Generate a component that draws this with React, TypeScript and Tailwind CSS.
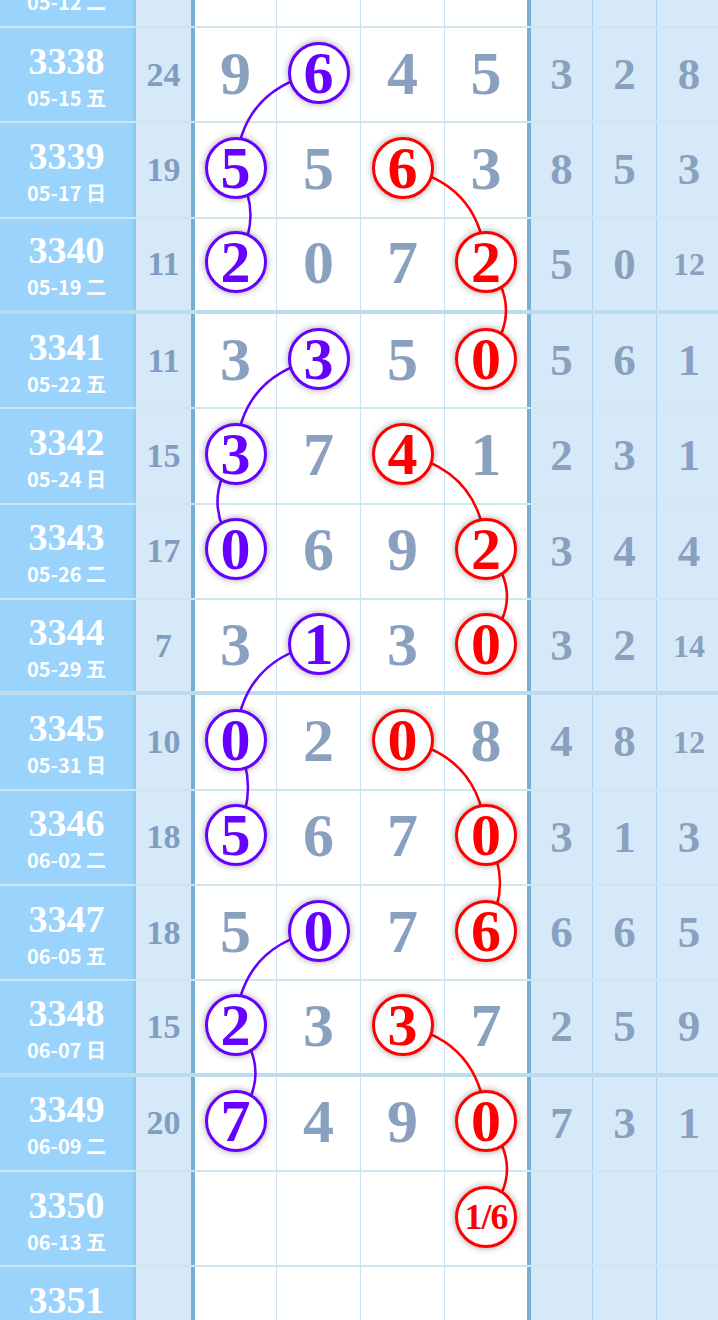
import React from "react";

interface Cell {
  v: string;
  m?: "p" | "r";
}

interface Row {
  no: number;
  date: string;
  sum: string;
  nums: Cell[];
  right: string[];
}

const H = 95.33;
const FIRST_LINE = 28;
const COL_X = [235.5, 319, 402.5, 486];

const n = (v: string, m?: "p" | "r"): Cell => ({ v, m });

const rows: Row[] = [
  { no: 3337, date: "05-12 二", sum: "23", nums: [n("7"), n("3"), n("9"), n("4")], right: ["1", "4", "6"] },
  { no: 3338, date: "05-15 五", sum: "24", nums: [n("9"), n("6", "p"), n("4"), n("5")], right: ["3", "2", "8"] },
  { no: 3339, date: "05-17 日", sum: "19", nums: [n("5", "p"), n("5"), n("6", "r"), n("3")], right: ["8", "5", "3"] },
  { no: 3340, date: "05-19 二", sum: "11", nums: [n("2", "p"), n("0"), n("7"), n("2", "r")], right: ["5", "0", "12"] },
  { no: 3341, date: "05-22 五", sum: "11", nums: [n("3"), n("3", "p"), n("5"), n("0", "r")], right: ["5", "6", "1"] },
  { no: 3342, date: "05-24 日", sum: "15", nums: [n("3", "p"), n("7"), n("4", "r"), n("1")], right: ["2", "3", "1"] },
  { no: 3343, date: "05-26 二", sum: "17", nums: [n("0", "p"), n("6"), n("9"), n("2", "r")], right: ["3", "4", "4"] },
  { no: 3344, date: "05-29 五", sum: "7", nums: [n("3"), n("1", "p"), n("3"), n("0", "r")], right: ["3", "2", "14"] },
  { no: 3345, date: "05-31 日", sum: "10", nums: [n("0", "p"), n("2"), n("0", "r"), n("8")], right: ["4", "8", "12"] },
  { no: 3346, date: "06-02 二", sum: "18", nums: [n("5", "p"), n("6"), n("7"), n("0", "r")], right: ["3", "1", "3"] },
  { no: 3347, date: "06-05 五", sum: "18", nums: [n("5"), n("0", "p"), n("7"), n("6", "r")], right: ["6", "6", "5"] },
  { no: 3348, date: "06-07 日", sum: "15", nums: [n("2", "p"), n("3"), n("3", "r"), n("7")], right: ["2", "5", "9"] },
  { no: 3349, date: "06-09 二", sum: "20", nums: [n("7", "p"), n("4"), n("9"), n("0", "r")], right: ["7", "3", "1"] },
  { no: 3350, date: "06-13 五", sum: "", nums: [n(""), n(""), n(""), n("1/6", "r")], right: ["", "", ""] },
  { no: 3351, date: "06-15 日", sum: "", nums: [n(""), n(""), n(""), n("")], right: ["", "", ""] },
];

// [from issue, from col, to issue, to col, bow, colour]
const links: [number, number, number, number, number, string][] = [
  [3338, 1, 3339, 0, 48, "#6600ff"],
  [3339, 0, 3340, 0, -30, "#6600ff"],
  [3341, 1, 3342, 0, 48, "#6600ff"],
  [3342, 0, 3343, 0, 36, "#6600ff"],
  [3344, 1, 3345, 0, 48, "#6600ff"],
  [3345, 0, 3346, 0, -25, "#6600ff"],
  [3347, 1, 3348, 0, 48, "#6600ff"],
  [3348, 0, 3349, 0, -40, "#6600ff"],
  [3339, 2, 3340, 3, -48, "#ff0000"],
  [3340, 3, 3341, 3, -40, "#ff0000"],
  [3342, 2, 3343, 3, -48, "#ff0000"],
  [3343, 3, 3344, 3, -42, "#ff0000"],
  [3345, 2, 3346, 3, -48, "#ff0000"],
  [3346, 3, 3347, 3, -28, "#ff0000"],
  [3348, 2, 3349, 3, -48, "#ff0000"],
  [3349, 3, 3350, 3, -42, "#ff0000"],
];

const isThick = (no: number) => (no - 3336) % 4 === 0;

const centerY = (no: number) => {
  const idx = no - 3338;
  const top = FIRST_LINE + idx * H;
  const inner = H - (isThick(no) ? 4 : 2);
  return top + inner / 2 - 2;
};

const linkPath = ([a, ca, b, cb, bow]: (typeof links)[number]) => {
  const x1 = COL_X[ca];
  const y1 = centerY(a);
  const x2 = COL_X[cb];
  const y2 = centerY(b);
  const dx = x2 - x1;
  const dy = y2 - y1;
  const len = Math.hypot(dx, dy);
  const qx = (x1 + x2) / 2 + (-dy / len) * bow;
  const qy = (y1 + y2) / 2 + (dx / len) * bow;
  return `M${x1} ${y1} Q${qx.toFixed(1)} ${qy.toFixed(1)} ${x2} ${y2}`;
};

const serif = { fontFamily: '"Liberation Serif", "Times New Roman", serif' };
const cjk = { fontFamily: '"Noto Sans CJK SC", "Noto Sans", sans-serif' };

const Ball: React.FC<{ cell: Cell }> = ({ cell }) => {
  if (!cell.v) return null;
  if (!cell.m)
    return <span className="text-[62px] leading-none font-bold text-[#89a1bf]">{cell.v}</span>;
  const color = cell.m === "p" ? "border-[#6600ff] text-[#6600ff]" : "border-[#ff0000] text-[#ff0000]";
  return (
    <span
      className={`relative z-10 flex h-[62px] w-[62px] items-center justify-center rounded-full border-[3px] bg-white font-bold leading-none shadow-[0_0_7px_rgba(0,0,0,0.38)] ${color} ${
        cell.v.length > 1 ? "text-[36px] tracking-[-1px]" : "text-[60px]"
      }`}
    >
      {cell.v}
    </span>
  );
};

const whiteCols = [
  "w-[82px] border-r border-[rgba(80,160,210,0.3)]",
  "w-[84px] border-r border-[rgba(80,160,210,0.3)]",
  "w-[84px] border-r border-[rgba(80,160,210,0.3)]",
  "w-[86px] border-r-4 border-[#78aed2]",
];

const rightCols = [
  "w-[62px] border-r border-[rgba(80,160,210,0.3)]",
  "w-[64px] border-r border-[rgba(80,160,210,0.3)]",
  "w-[64px]",
];

const TrendRow: React.FC<{ row: Row }> = ({ row }) => (
  <div
    className={`flex h-[95.33px] shrink-0 ${
      isThick(row.no) ? "border-b-4 border-[rgba(80,160,210,0.38)]" : "border-b-2 border-[rgba(80,160,210,0.28)]"
    }`}
  >
    <div className="flex w-[136px] shrink-0 flex-col items-center justify-center border-r-[3px] border-[#8ccbf5] bg-[#9ad3fb] text-white">
      <span className="text-[38px] leading-none font-bold">{row.no}</span>
      <span className="mt-[8px] text-[20px] leading-none font-bold" style={cjk}>
        {row.date}
      </span>
    </div>
    <div className="flex w-[59px] shrink-0 items-center justify-center border-r-4 border-[#78aed2] bg-[#d6e9f9] text-[34px] leading-none font-bold text-[#7f9dc1]">
      {row.sum}
    </div>
    {row.nums.map((c, i) => (
      <div key={i} className={`flex shrink-0 items-center justify-center bg-white pb-[4px] ${whiteCols[i]}`}>
        <Ball cell={c} />
      </div>
    ))}
    {row.right.map((v, i) => (
      <div
        key={i}
        className={`flex shrink-0 items-center justify-center bg-[#d6e9f9] font-bold leading-none text-[#89a1bf] ${rightCols[i]} ${
          v.length > 1 ? "text-[32px]" : "text-[45px]"
        }`}
      >
        {v}
      </div>
    ))}
  </div>
);

export default function App() {
  return (
    <div className="relative h-[1320px] w-[718px] overflow-hidden bg-white" style={serif}>
      <div className="mt-[-67.33px] flex flex-col">
        {rows.map((r) => (
          <TrendRow key={r.no} row={r} />
        ))}
      </div>
      <svg className="pointer-events-none absolute inset-0" width="718" height="1320" viewBox="0 0 718 1320">
        {links.map((l, i) => (
          <path key={i} d={linkPath(l)} fill="none" stroke={l[5]} strokeWidth="2.5" />
        ))}
      </svg>
    </div>
  );
}
